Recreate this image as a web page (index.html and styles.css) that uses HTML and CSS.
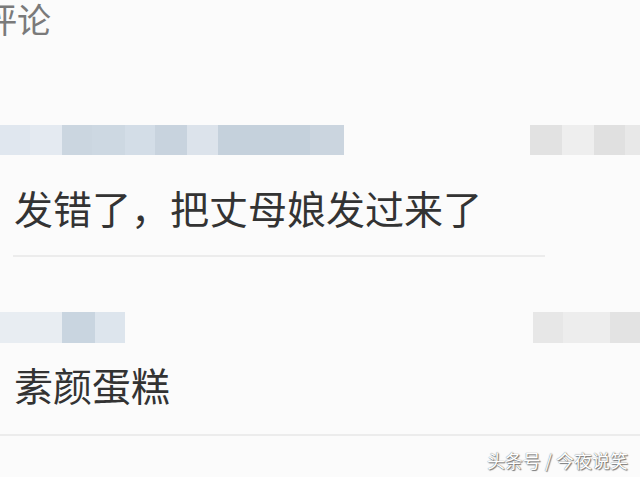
FILE: index.html
```html
<!DOCTYPE html>
<html lang="zh">
<head>
  <meta charset="UTF-8" />
  <title>评论</title>
  <link rel="stylesheet" href="styles.css">
</head>
<body>

<div class="page">
  <h2 class="title">评论</h2>

  <div class="comment">
    <div class="mosaic-row first">
      <div class="mosaic blue">
        <span style="width:30px;background:#e0e7ef"></span>
        <span style="width:32px;background:#e4eaf1"></span>
        <span style="width:30px;background:#cbd6e0"></span>
        <span style="width:33px;background:#cdd8e2"></span>
        <span style="width:30px;background:#d3dde7"></span>
        <span style="width:32px;background:#c8d3de"></span>
        <span style="width:31px;background:#dce3eb"></span>
        <span style="width:92px;background:#c5d1dc"></span>
        <span style="width:34px;background:#cbd5df"></span>
      </div>
      <div class="mosaic grey">
        <span style="width:32px;background:#e2e2e2"></span>
        <span style="width:32px;background:#eeeeee"></span>
        <span style="width:31px;background:#e0e0e0"></span>
        <span style="width:15px;background:#e8e8e8"></span>
      </div>
    </div>
    <p class="text">发错了，把丈母娘发过来了</p>
    <div class="divider short"></div>
  </div>

  <div class="comment">
    <div class="mosaic-row second">
      <div class="mosaic blue">
        <span style="width:62px;background:#e8edf2"></span>
        <span style="width:33px;background:#c9d5e0"></span>
        <span style="width:30px;background:#dde5ed"></span>
      </div>
      <div class="mosaic grey">
        <span style="width:30px;background:#e7e7e7"></span>
        <span style="width:47px;background:#ededed"></span>
        <span style="width:30px;background:#e3e3e3"></span>
      </div>
    </div>
    <p class="text">素颜蛋糕</p>
    <div class="divider full"></div>
  </div>

  <div class="watermark">头条号 / 今夜说笑</div>
</div>

</body>
</html>
```

FILE: styles.css
```css
body {
  margin: 0;
  background-color: #fbfbfb;
  font-family: "Noto Sans CJK SC", "Noto Sans", sans-serif;
}
.page {
  position: relative;
  width: 640px;
  height: 477px;
  overflow: hidden;
}
.title {
  margin: 0 0 0 -17px;
  height: 40px;
  font-size: 34px;
  font-weight: normal;
  line-height: 38px;
  color: #7a7a7a;
}
.mosaic-row {
  display: flex;
  justify-content: space-between;
  height: 30px;
}
.mosaic-row.first {
  margin-top: 85px;
}
.mosaic-row.second {
  margin-top: 55px;
  height: 31px;
}
.mosaic {
  display: flex;
  height: 100%;
}
.mosaic span {
  display: block;
  height: 100%;
}
.text {
  margin: 0 0 0 14px;
  font-size: 39px;
  line-height: 50px;
  color: #333333;
}
.mosaic-row.first + .text {
  margin-top: 27px;
}
.mosaic-row.second + .text {
  margin-top: 16px;
}
.divider {
  height: 2px;
  background-color: #ececec;
}
.divider.short {
  margin: 23px 95px 0 13px;
}
.divider.full {
  margin-top: 25px;
}
.watermark {
  position: absolute;
  right: 12px;
  bottom: 6px;
  font-size: 18px;
  line-height: 22px;
  color: #ffffff;
  text-shadow: 0 0 1px #555, 1px 1px 1px #777;
}
```
